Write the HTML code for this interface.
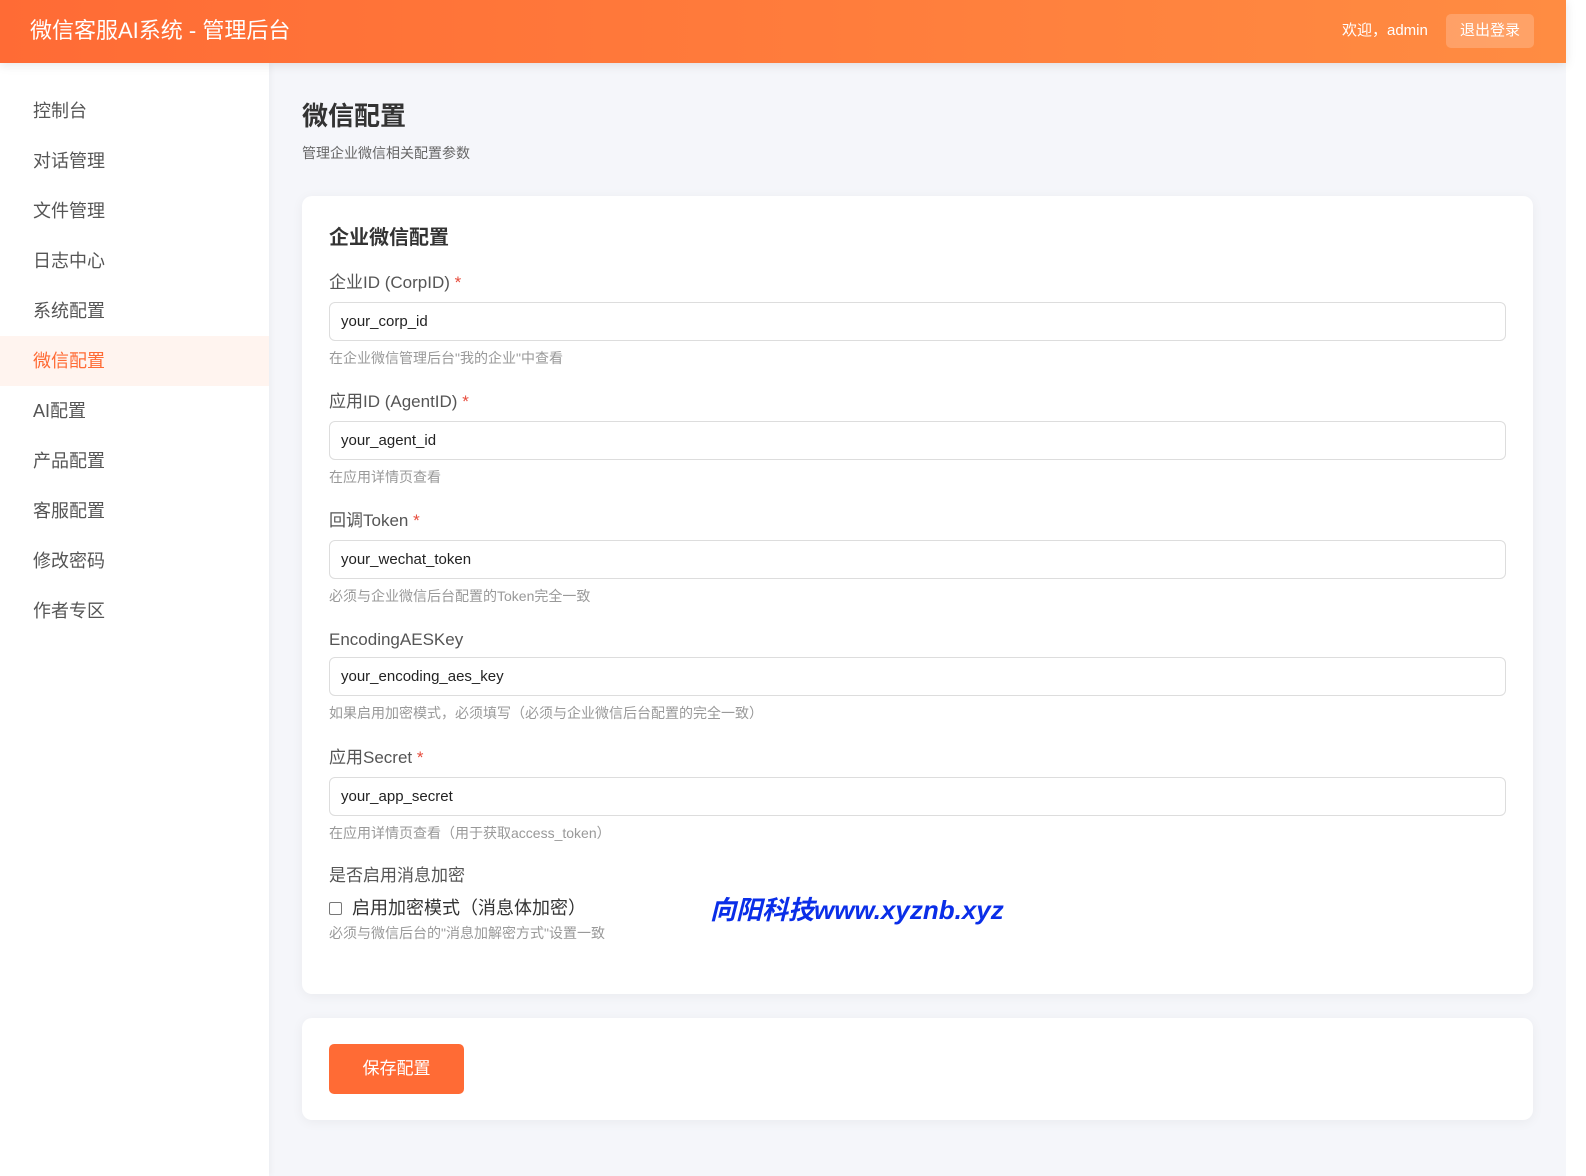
<!DOCTYPE html>
<html><head><meta charset="utf-8"><style>
*{box-sizing:border-box;margin:0;padding:0}
html,body{width:1586px;height:1176px;background:#fff;overflow:hidden}
body{font-family:"Liberation Sans","Noto Sans CJK SC",sans-serif;position:relative}
.wrap{position:absolute;left:0;top:0;width:1566px;height:1176px;background:#f5f6fa}
.hdr{position:absolute;left:0;top:0;width:1566px;height:63px;background:linear-gradient(90deg,#ff6b35,#ff8c42);box-shadow:0 2px 10px rgba(0,0,0,.1);z-index:2}
.hdr .t{position:absolute;left:30px;top:16px;color:#fff;font-size:22px;line-height:30px}
.hdr .w{position:absolute;left:1342px;top:21px;color:#fff;font-size:15px;line-height:20px}
.hdr .b{position:absolute;left:1446px;top:14px;width:88px;height:34px;border-radius:5px;background:rgba(255,255,255,.2);color:#fff;font-size:15px;line-height:34px;text-align:center}
.side{position:absolute;left:0;top:63px;width:269px;height:1113px;background:#fff;box-shadow:2px 0 6px rgba(0,0,0,.04)}
.side div{height:50px;line-height:50px;padding-left:33px;font-size:18px;color:#555}
.side .a{background:#fff4ef;color:#ff6b35}
.main{position:absolute;left:302px;top:63px;width:1231px}
h1{position:absolute;top:36px;font-size:26px;color:#333;line-height:34px}
.sub{position:absolute;top:80px;font-size:14px;color:#666}
.card{position:absolute;left:0;width:1231px;background:#fff;border-radius:10px;box-shadow:0 2px 12px rgba(0,0,0,.05)}
.c1{top:133px;height:798px}
.c2{top:955px;height:102px}
h2{position:absolute;left:27px;top:28px;font-size:20px;color:#333;line-height:28px}
.f{position:absolute;left:27px;width:1177px}
.f label{display:block;font-size:17px;color:#555;line-height:24px}
.f label i{font-style:normal;color:#e74c3c}
.f .in{margin-top:7px;height:39px;border:1px solid #ddd;border-radius:6px;padding-left:11px;line-height:37px;font-size:15px;color:#222}
.f .h{margin-top:7px;font-size:14px;color:#999;line-height:20px}
.btn{position:absolute;left:27px;top:26px;width:135px;height:50px;background:#ff6b35;border-radius:5px;color:#fff;font-size:17px;line-height:50px;text-align:center}
</style></head><body><div class="wrap">
<div class="hdr"><div class="t">微信客服AI系统 - 管理后台</div><div class="w">欢迎，admin</div><div class="b">退出登录</div></div>
<div class="side" style="padding-top:23px">
<div>控制台</div><div>对话管理</div><div>文件管理</div><div>日志中心</div><div>系统配置</div><div class="a">微信配置</div><div>AI配置</div><div>产品配置</div><div>客服配置</div><div>修改密码</div><div>作者专区</div>
</div>
<div class="main">
<h1>微信配置</h1><div class="sub">管理企业微信相关配置参数</div>
<div class="card c1">
<h2>企业微信配置</h2>
<div class="f" style="top:75px"><label>企业ID (CorpID) <i>*</i></label><div class="in">your_corp_id</div><div class="h">在企业微信管理后台"我的企业"中查看</div></div>
<div class="f" style="top:194px"><label>应用ID (AgentID) <i>*</i></label><div class="in">your_agent_id</div><div class="h">在应用详情页查看</div></div>
<div class="f" style="top:313px"><label>回调Token <i>*</i></label><div class="in">your_wechat_token</div><div class="h">必须与企业微信后台配置的Token完全一致</div></div>
<div class="f" style="top:432px"><label>EncodingAESKey</label><div class="in" style="margin-top:5px">your_encoding_aes_key</div><div class="h">如果启用加密模式，必须填写（必须与企业微信后台配置的完全一致）</div></div>
<div class="f" style="top:550px"><label>应用Secret <i>*</i></label><div class="in">your_app_secret</div><div class="h">在应用详情页查看（用于获取access_token）</div></div>
<div class="f" style="top:668px"><label>是否启用消息加密</label>
<div style="margin-top:9px;font-size:18px;color:#333;line-height:22px"><span style="display:inline-block;width:13px;height:13px;border:1px solid #777;border-radius:2px;vertical-align:-1px;margin-right:10px"></span>启用加密模式（消息体加密）</div>
<div class="h" style="margin-top:4px">必须与微信后台的"消息加解密方式"设置一致</div></div>
<div style="position:absolute;left:408px;top:697px;color:#0a2ee8;font-size:26px;font-style:italic;font-weight:bold;line-height:34px">向阳科技www.xyznb.xyz</div>
</div>
<div class="card c2"><div class="btn">保存配置</div></div>
</div>
</div></body></html>
